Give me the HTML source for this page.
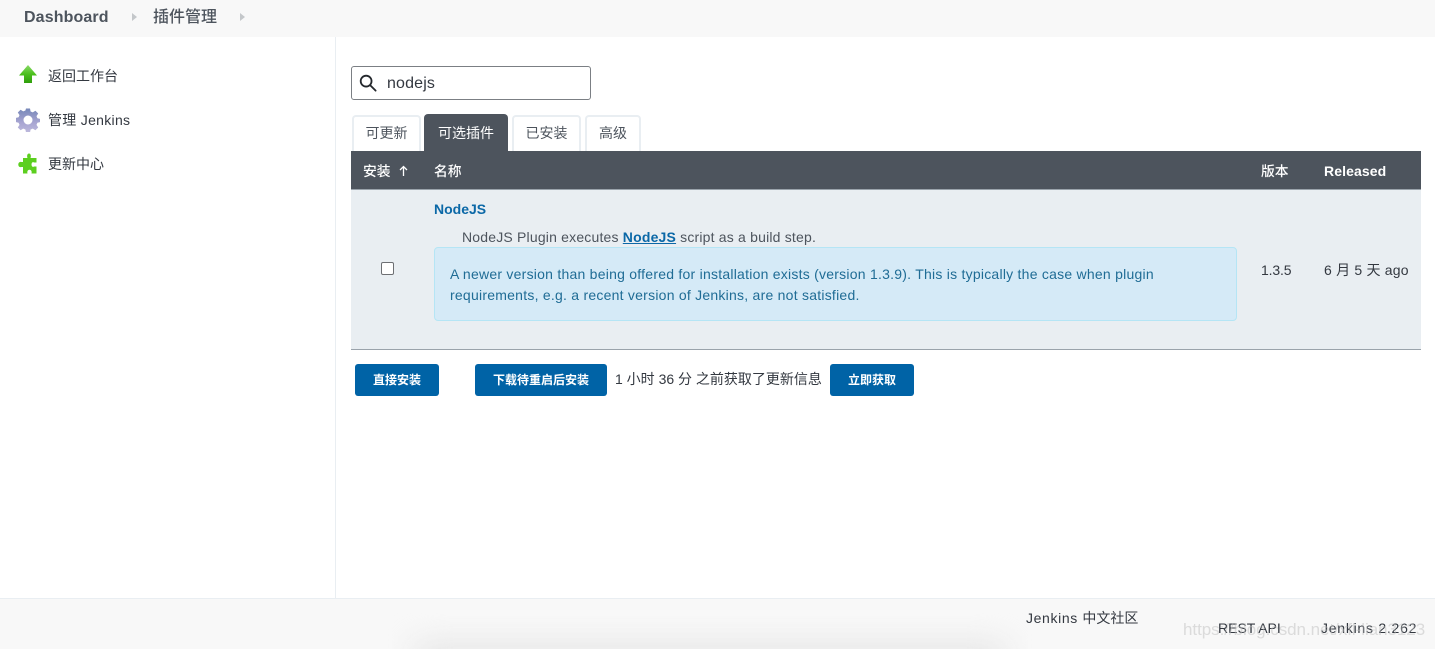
<!DOCTYPE html>
<html lang="zh"><head><meta charset="utf-8"><title>插件管理</title>
<style>
html,body{margin:0;padding:0;background:#fff}
body{width:1435px;height:649px;position:relative;overflow:hidden;font-family:"Liberation Sans","Noto Sans CJK SC",sans-serif;font-size:14px;color:#333840}
.a{position:absolute;white-space:nowrap;line-height:20px}
.btn{position:absolute;background:#0063a6;color:#fff;border-radius:3px;font-size:12px;font-weight:700;text-align:center;height:32px;line-height:32px;top:364px}
.tab{position:absolute;top:115px;height:36px;box-sizing:border-box;border:2px solid #e9eef2;border-bottom:0;border-radius:4px 4px 0 0;text-align:center;line-height:33px;font-size:14px;color:#4d545d;background:#fff}
</style></head><body>
<div class="a" style="left:0;top:0;width:1435px;height:37px;background:#f8f8f8"></div>
<div class="a" style="left:24px;top:8px;font-size:16px;font-weight:700;color:#4d545d;letter-spacing:.12px">Dashboard</div>
<div class="a" style="left:132px;top:13px;width:0;height:0;border-left:5px solid #c4c7ca;border-top:4px solid transparent;border-bottom:4px solid transparent"></div>
<div class="a" style="left:153px;top:8px;font-size:16px;color:#4d545d;font-weight:500">插件管理</div>
<div class="a" style="left:240px;top:13px;width:0;height:0;border-left:5px solid #c4c7ca;border-top:4px solid transparent;border-bottom:4px solid transparent"></div>
<div class="a" style="left:335px;top:37px;width:1px;height:561px;background:#e9eef2"></div>

<svg class="a" style="left:18px;top:64px" width="20" height="20" viewBox="0 0 20 20"><defs><linearGradient id="g" x1="0" y1="0" x2="0" y2="1"><stop offset="0" stop-color="#8ad968"/><stop offset=".5" stop-color="#4cc01e"/><stop offset="1" stop-color="#2f9e0c"/></linearGradient></defs><path d="M10 1L19 11.500H14V19H6V11.500H1Z" fill="url(#g)"/></svg>
<div class="a" style="left:48px;top:66px;font-size:14px;color:#333840">返回工作台</div>

<svg class="a" style="left:16px;top:108px" width="24" height="24" viewBox="0 0 24 24"><defs><linearGradient id="h" x1="0" y1="0" x2="0" y2="1"><stop offset="0" stop-color="#7687b8"/><stop offset=".6" stop-color="#a9a6d2"/><stop offset="1" stop-color="#bdb9dc"/></linearGradient></defs><path fill-rule="evenodd" d="M10 .5h4l.6 3 2.200.9 2.600-1.700 2.800 2.800-1.700 2.600.9 2.200 3 .6v3.200l-3 .6-.9 2.200 1.700 2.600-2.800 2.800-2.600-1.700-2.200.9-.6 3h-4l-.6-3-2.200-.9-2.600 1.700-2.800-2.800 1.700-2.600-.9-2.200-3-.6V9.900l3-.6.9-2.200L1.800 4.500l2.800-2.800 2.600 1.700 2.200-.9ZM12 7.500a4.500 4.500 0 1 0 0 9a4.500 4.500 0 0 0 0-9Z" fill="url(#h)"/></svg>
<div class="a" style="left:48px;top:110px;font-size:14px;color:#333840;letter-spacing:.3px">管理 Jenkins</div>

<svg class="a" style="left:18px;top:153px" width="20" height="22" viewBox="0 0 20 22"><path d="M5 5H9.500C8.800 3.500 9 .5 11 .5S13.200 3.500 12.500 5H18.500V9.500H16C15 8.500 13.500 9.500 13.500 11.500S15 14.500 16 13.500H18.500V20.500H13.500C14 19 13.500 16.800 11.500 16.800S9 19 9.500 20.500H5V14H3.500C2.500 14.500 .3 14 .3 11.500S2.500 8.500 3.500 9H5Z" fill="#5ccf1f"/></svg>
<div class="a" style="left:48px;top:154px;font-size:14px;color:#333840">更新中心</div>

<div class="a" style="left:351px;top:66px;width:240px;height:34px;box-sizing:border-box;border:1px solid #7b7f84;border-radius:3px;background:#fff"></div>
<svg class="a" style="left:359px;top:74px" width="19" height="19" viewBox="0 0 20 20" fill="none" stroke="#23272c" stroke-width="1.900" stroke-linecap="round"><circle cx="7.500" cy="7.500" r="5.700"/><path d="M11.800 11.800L17.500 17.500"/></svg>
<div class="a" style="left:387px;top:74px;font-size:16px;color:#333840;letter-spacing:.15px">nodejs</div>

<div class="tab" style="left:352px;width:69px">可更新</div>
<div class="a" style="left:424px;top:114px;width:84px;height:37px;background:#4d545d;border-radius:4px 4px 0 0;color:#fff;text-align:center;line-height:38px;font-size:14px">可选插件</div>
<div class="tab" style="left:512px;width:69px">已安装</div>
<div class="tab" style="left:585px;width:56px">高级</div>

<div class="a" style="left:351px;top:151px;width:1070px;height:38px;background:#4d545d"></div>
<div class="a" style="left:351px;top:189px;width:1070px;height:1px;background:#9aa3ab"></div>
<div class="a" style="left:363px;top:162px;font-size:13.800px;color:#fff;font-weight:500">安装</div>
<svg class="a" style="left:398px;top:165px" width="11" height="12" viewBox="0 0 11 12" fill="none" stroke="#fff" stroke-width="1.300"><path d="M5.500 11V1.500M2 5L5.500 1.500L9 5"/></svg>
<div class="a" style="left:434px;top:162px;font-size:13.800px;color:#fff;font-weight:500">名称</div>
<div class="a" style="left:1261px;top:162px;font-size:13.800px;color:#fff;font-weight:500">版本</div>
<div class="a" style="left:1324px;top:161px;font-size:14px;color:#fff;font-weight:700;letter-spacing:.1px">Released</div>

<div class="a" style="left:351px;top:190px;width:1070px;height:159px;background:#e9eef2"></div>
<div class="a" style="left:351px;top:349px;width:1070px;height:1px;background:#9aa3ab"></div>
<div class="a" style="left:434px;top:199px;font-size:14px;font-weight:700;color:#0b68a7">NodeJS</div>
<div class="a" style="left:462px;top:227px;font-size:14px;color:#4d545d;letter-spacing:.19px">NodeJS Plugin executes <span style="color:#0b68a7;font-weight:700;text-decoration:underline">NodeJS</span> script as a build step.</div>
<div class="a" style="left:381px;top:262px;width:13px;height:13px;box-sizing:border-box;border:1px solid #6d6f73;border-radius:2px;background:#fff"></div>
<div class="a" style="left:434px;top:247px;width:803px;height:74px;box-sizing:border-box;border:1px solid #b5e5f5;border-radius:4px;background:#d5eaf7"></div>
<div class="a" style="left:450px;top:264px;font-size:14px;color:#1f6c95;letter-spacing:.24px">A newer version than being offered for installation exists (version 1.3.9). This is typically the case when plugin</div>
<div class="a" style="left:450px;top:285px;font-size:14px;color:#1f6c95;letter-spacing:.24px">requirements, e.g. a recent version of Jenkins, are not satisfied.</div>
<div class="a" style="left:1261px;top:260px;font-size:14px;color:#333840;letter-spacing:-.15px">1.3.5</div>
<div class="a" style="left:1324px;top:260px;font-size:14px;color:#333840;letter-spacing:.2px">6 月 5 天 ago</div>

<div class="btn" style="left:355px;width:84px">直接安装</div>
<div class="btn" style="left:475px;width:132px">下载待重启后安装</div>
<div class="a" style="left:615px;top:369px;font-size:14px;color:#333840">1 小时 36 分 之前获取了更新信息</div>
<div class="btn" style="left:830px;width:84px">立即获取</div>

<div class="a" style="left:0;top:598px;width:1435px;height:51px;box-sizing:border-box;border-top:1px solid #e9eef2;background:#f8f8f8;overflow:hidden">
<div style="position:absolute;left:415px;top:46px;width:590px;height:26px;background:#e2e2e2;filter:blur(16px)"></div>
</div>
<div class="a" style="left:1026px;top:608px;font-size:14px;color:#333840"><span style="letter-spacing:.63px">Jenkins </span>中文社区</div>
<div class="a" style="left:1218px;top:618px;font-size:14px;color:#333840">REST API</div>
<div class="a" style="left:1321px;top:618px;font-size:14px;color:#333840;letter-spacing:.75px">Jenkins 2.262</div>
<div class="a" style="left:1183px;top:620px;font-size:17px;color:rgba(190,190,190,.5);letter-spacing:-.05px">https://blog.csdn.net/xfl-lian3123</div>
</body></html>
